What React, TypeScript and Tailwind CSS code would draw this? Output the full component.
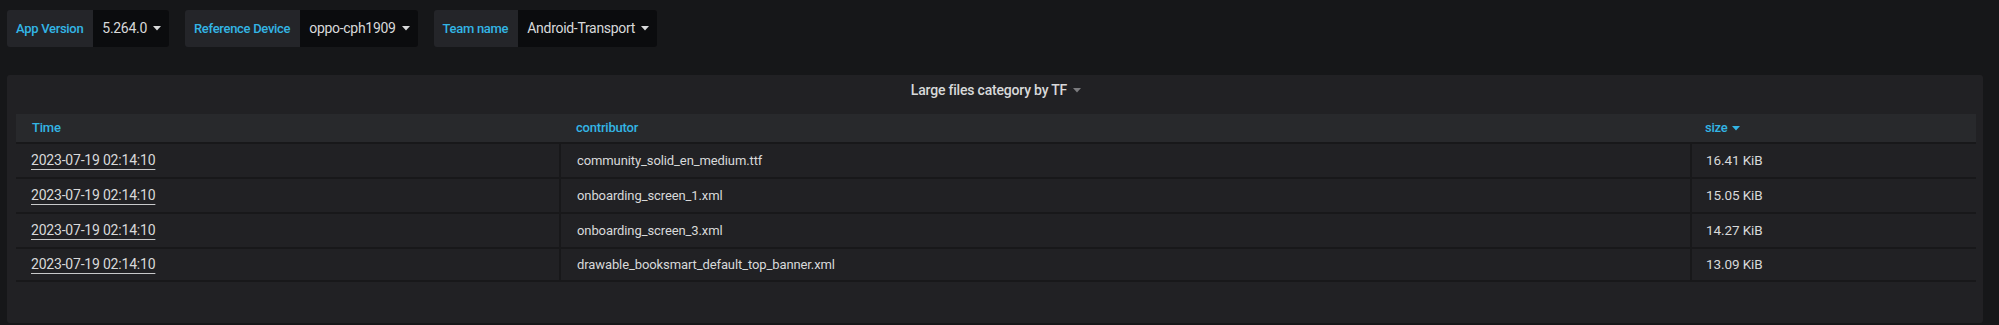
import React from "react";

const Caret = ({ color = "#d8d9da" }: { color?: string }) => (
  <svg width="8" height="5" viewBox="0 0 8 5" className="inline-block">
    <path d="M0 0 L8 0 L4 4.5 Z" fill={color} />
  </svg>
);

const VarBox = ({ label, value }: { label: string; value: string }) => (
  <div className="flex h-[37px] rounded-[3px] overflow-hidden">
    <div className="flex items-center bg-[#242529] pl-[9px] pr-[10px] text-[13px] font-medium text-[#33b5e5] tracking-[-0.3px]">
      {label}
    </div>
    <div className="flex items-center gap-[6px] bg-[#0b0c0e] pl-[9px] pr-[8px] text-[14px] text-[#d8d9da] tracking-[-0.3px]">
      <span>{value}</span>
      <Caret />
    </div>
  </div>
);

const rows = [
  { t: "2023-07-19 02:14:10", c: "community_solid_en_medium.ttf", s: "16.41 KiB" },
  { t: "2023-07-19 02:14:10", c: "onboarding_screen_1.xml", s: "15.05 KiB" },
  { t: "2023-07-19 02:14:10", c: "onboarding_screen_3.xml", s: "14.27 KiB" },
  { t: "2023-07-19 02:14:10", c: "drawable_booksmart_default_top_banner.xml", s: "13.09 KiB" },
];

export default function App() {
  return (
    <div className="w-[1999px] h-[325px] overflow-hidden bg-[#161719] pt-[10px] font-['Roboto','Liberation_Sans',sans-serif]">
      <div className="flex gap-[16px] pl-[7px]">
        <VarBox label="App Version" value="5.264.0" />
        <VarBox label="Reference Device" value="oppo-cph1909" />
        <VarBox label="Team name" value="Android-Transport" />
      </div>
      <div className="mt-[28px] ml-[7px] w-[1976px] h-[248px] bg-[#212124] rounded-[3px] pl-[9px] pr-[7px]">
        <div className="flex h-[30px] items-center justify-center gap-[6px] text-[14px] font-medium text-[#d8d9da] tracking-[-0.2px]">
          <span>Large files category by TF</span>
          <Caret color="#7b7b7e" />
        </div>
        <div className="mt-[9px] w-[1960px]">
          <div className="flex h-[28px] items-center bg-[#28292c] text-[13px] font-medium text-[#33b5e5] tracking-[-0.2px]">
            <div className="w-[544px] pl-[16px]">Time</div>
            <div className="w-[1130px] pl-[16px]">contributor</div>
            <div className="flex-1 pl-[15px] flex items-center gap-[4px]">
              <span>size</span>
              <Caret color="#33b5e5" />
            </div>
          </div>
          {rows.map((r, i) => (
            <div key={i} className="flex h-[35px] border-t-2 border-[#18181a] text-[13px] text-[#d8d9da] tracking-[-0.1px] last:border-b-2">
              <div className="w-[543px] pl-[15px] flex items-center">
                <span className="text-[14px] tracking-[-0.2px] underline decoration-[#c8c9ca] decoration-1 underline-offset-[4px]">{r.t}</span>
              </div>
              <div className="w-[1131px] pl-[16px] flex items-center border-l-2 border-[#18181a]">{r.c}</div>
              <div className="flex-1 pl-[14px] flex items-center border-l-2 border-[#18181a] text-[13.5px]">{r.s}</div>
            </div>
          ))}
        </div>
      </div>
    </div>
  );
}
